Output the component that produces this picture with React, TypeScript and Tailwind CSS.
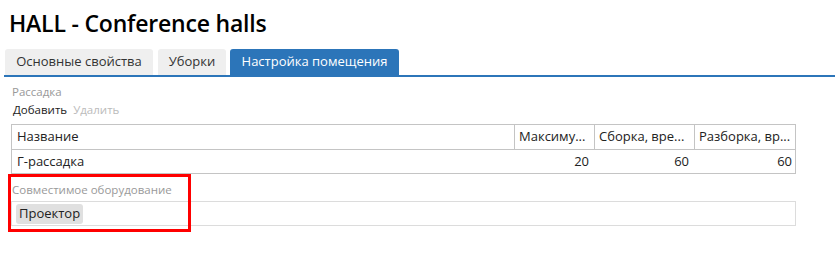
const font = { fontFamily: '"Open Sans", "Noto Sans", sans-serif' };

export default function App() {
  return (
    <div className="w-[835px] h-[280px] bg-white text-[#222] overflow-hidden" style={font}>
      <h1 className="pl-[9px] pt-[9px] h-[40px] text-[23px] leading-[28px] font-semibold text-black tracking-[-0.2px]">
        HALL - Conference halls
      </h1>
      <div className="flex items-end gap-[5px] pl-[1px] h-[37px] border-b-2 border-[#2c75b9] ml-[4px]">
        <div className="h-[26px] w-[148px] flex items-center justify-center bg-[#efefef] rounded-t-[3px] text-[13px] text-[#333]">
          Основные свойства
        </div>
        <div className="h-[26px] w-[68px] flex items-center justify-center bg-[#efefef] rounded-t-[3px] text-[13px] text-[#333]">
          Уборки
        </div>
        <div className="h-[26px] w-[169px] flex items-center justify-center bg-[#2c75b9] rounded-t-[3px] text-[13px] text-white -ml-[1px]">
          Настройка помещения
        </div>
      </div>
      <div className="pl-[11px] pr-[39px]">
        <div className="mt-[6px] text-[11.5px] leading-[18px] text-[#999] pl-[1px]">Рассадка</div>
        <div className="flex gap-[6px] text-[11.5px] leading-[18px] pl-[2px]">
          <span className="text-[#222]">Добавить</span>
          <span className="text-[#bbb]">Удалить</span>
        </div>
        <div className="mt-[5px] border border-[#c4c4c4] text-[13px] whitespace-nowrap">
          <div className="flex h-[25px] border-b border-[#c4c4c4]">
            <div className="flex-1 px-[5px] flex items-center">Название</div>
            <div className="w-[80px] px-[4px] flex items-center border-l border-[#c4c4c4] overflow-hidden">Максиму...</div>
            <div className="w-[100px] px-[4px] flex items-center border-l border-[#c4c4c4] overflow-hidden">Сборка, вре...</div>
            <div className="w-[101px] px-[4px] flex items-center border-l border-[#c4c4c4] overflow-hidden">Разборка, вр...</div>
          </div>
          <div className="flex h-[23px]">
            <div className="flex-1 px-[5px] flex items-center">Г-рассадка</div>
            <div className="w-[80px] px-[5px] flex items-center justify-end">20</div>
            <div className="w-[100px] px-[5px] flex items-center justify-end">60</div>
            <div className="w-[101px] px-[3px] flex items-center justify-end">60</div>
          </div>
        </div>
        <div className="relative">
          <div className="absolute -left-[3px] top-0 w-[183px] h-[58px] border-[3px] border-[#ff0000]" />
          <div className="pt-[7px] text-[11.5px] leading-[18px] text-[#999] pl-[1px]">Совместимое оборудование</div>
          <div className="mt-[2px] h-[25px] border border-[#dcdcdc] flex items-center px-[4px]">
            <span className="bg-[#e0e0e0] rounded-[3px] px-[3px] h-[20px] flex items-center text-[13px] text-[#222]">
              Проектор
            </span>
          </div>
        </div>
      </div>
    </div>
  );
}
